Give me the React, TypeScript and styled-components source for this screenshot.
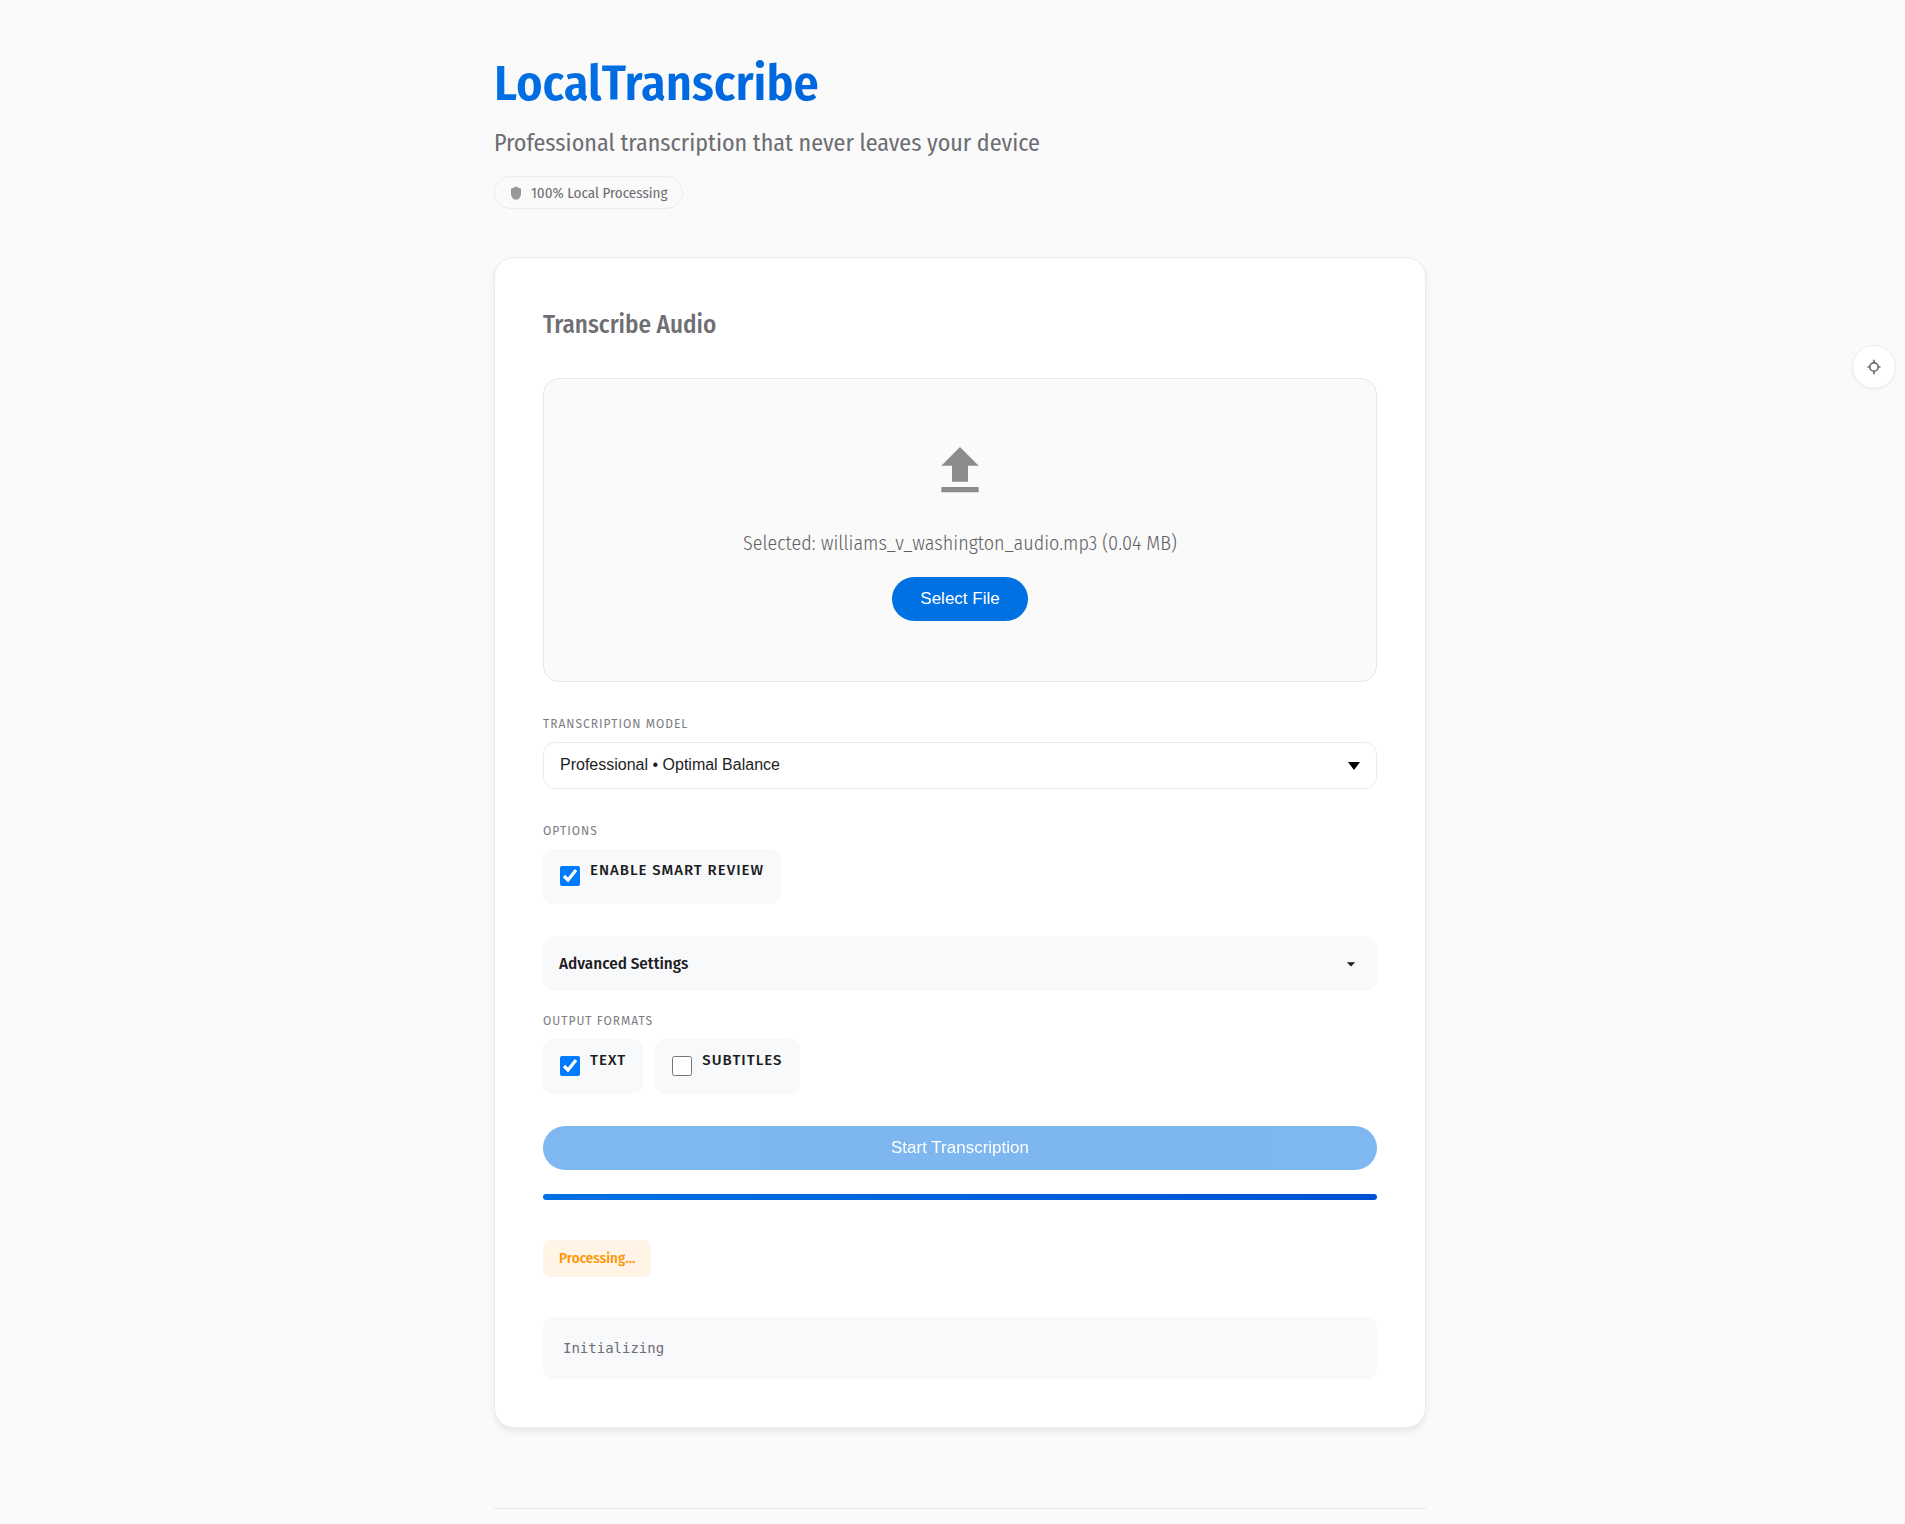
import React, { useState } from 'react';
import styled, { createGlobalStyle } from 'styled-components';

const GlobalStyle = createGlobalStyle`
  *, *::before, *::after { box-sizing: border-box; }
  body {
    margin: 0;
    background: #fafafa;
    color: #1d1d1f;
    font-family: 'Fira Sans Condensed', 'Open Sans', sans-serif;
    font-size: 17px;
    line-height: 24px;
    -webkit-font-smoothing: antialiased;
  }
`;

const Page = styled.div`
  padding: 48px 16px 0 31px;
`;

const Container = styled.div`
  max-width: 932px;
  margin: 0 auto;
`;

const Header = styled.header`
  margin-bottom: 48px;
`;

const Title = styled.h1`
  margin: 0 0 8px;
  font-size: 50px;
  font-weight: 600;
  line-height: 70px;
  background: linear-gradient(135deg, #0071e3, #0051d5);
  background-clip: text;
  -webkit-background-clip: text;
  color: transparent;
`;

const Subtitle = styled.p`
  margin: 0 0 16px;
  font-size: 24px;
  line-height: 34px;
  color: #6e6e73;
`;

const Badge = styled.div`
  display: inline-flex;
  align-items: center;
  gap: 8px;
  height: 33px;
  padding: 0 14px;
  border: 1px solid #ebebeb;
  border-radius: 17px;
  font-size: 15px;
  color: #6e6e73;
  vertical-align: top;
`;

const Card = styled.main`
  padding: 48px;
  background: #ffffff;
  border: 1px solid #ebebeb;
  border-radius: 20px;
  box-shadow: 0 4px 6px rgba(0, 0, 0, 0.07);
`;

const CardTitle = styled.h2`
  margin: 0 0 34px;
  font-size: 25px;
  font-weight: 500;
  line-height: 38px;
  color: #6e6e73;
`;

const DropZone = styled.section`
  display: flex;
  flex-direction: column;
  align-items: center;
  padding: 60px 24px;
  margin-bottom: 32px;
  background: #fafafa;
  border: 1px solid #e8e8e8;
  border-radius: 16px;
`;

const FileName = styled.p`
  margin: 24px 0 18px;
  font-size: 20px;
  font-weight: 300;
  line-height: 32px;
  color: #5f5f64;
`;

const Button = styled.button<{ $wide?: boolean }>`
  display: block;
  width: ${p => (p.$wide ? '100%' : 'auto')};
  height: 44px;
  padding: 0 28px;
  border: 0;
  border-radius: 22px;
  background: #0071e3;
  color: #ffffff;
  font-family: 'Liberation Sans', Arial, sans-serif;
  font-size: 17px;
  cursor: pointer;
  &:disabled { opacity: 0.5; cursor: default; }
`;

const Field = styled.div`
  margin-bottom: 32px;
`;

const FieldSet = styled.fieldset`
  min-width: 0;
  margin: 0 0 32px;
  padding: 0;
  border: 0;
`;

const caption = `
  display: block;
  margin: 0 0 8px;
  padding: 0;
  font-family: 'Fira Sans', 'Open Sans', sans-serif;
  font-size: 12px;
  font-weight: 400;
  line-height: 20px;
  letter-spacing: 1px;
  text-transform: uppercase;
  color: #7c7c81;
`;
const Label = styled.label`${caption}`;
const Legend = styled.legend`${caption}`;

const SelectWrap = styled.div`
  position: relative;
`;

const Select = styled.select`
  display: block;
  width: 100%;
  height: 47px;
  padding: 0 48px 2px 16px;
  appearance: none;
  background: #ffffff;
  border: 1px solid #ebebeb;
  border-radius: 12px;
  color: #1d1d1f;
  font-family: 'Liberation Sans', Arial, sans-serif;
  font-size: 16px;
`;

const SelectArrow = styled.svg`
  position: absolute;
  top: 20px;
  right: 17px;
  pointer-events: none;
`;

const Chips = styled.div`
  display: flex;
  flex-wrap: wrap;
  gap: 12px;
`;

const Chip = styled.label`
  display: flex;
  align-items: center;
  gap: 10px;
  padding: 13px 17px 14px;
  background: #f8f9fb;
  border-radius: 10px;
  cursor: pointer;
`;

const Check = styled.input`
  width: 20px;
  height: 20px;
  margin: 0;
  accent-color: #007aff;
`;

const ChipText = styled.span`
  margin-bottom: 12px;
  font-family: 'Fira Sans', 'Open Sans', sans-serif;
  font-size: 15px;
  font-weight: 500;
  line-height: 16px;
  letter-spacing: 1px;
  text-transform: uppercase;
`;

const Disclosure = styled.button`
  display: flex;
  align-items: center;
  justify-content: space-between;
  width: 100%;
  height: 55px;
  margin-bottom: 20px;
  padding: 0 16px;
  background: #f8f9fb;
  border: 0;
  border-radius: 12px;
  color: #1d1d1f;
  font: inherit;
  font-weight: 500;
  cursor: pointer;
`;

const Track = styled.div`
  height: 6px;
  margin: 24px 0 40px;
  overflow: hidden;
  background: #ebebeb;
  border-radius: 3px;
`;

const Bar = styled.div`
  height: 100%;
  background: linear-gradient(90deg, #0071e3, #0051d5);
`;

const Status = styled.div`
  display: table;
  margin-bottom: 40px;
  padding: 8px 16px;
  background: #fff4e6;
  border-radius: 8px;
  color: #ff9500;
  font-size: 15px;
  font-weight: 500;
  line-height: 21px;
`;

const Log = styled.div`
  padding: 20px;
  background: #f8f9fb;
  border-radius: 12px;
  color: #6e6e73;
  font-family: 'DejaVu Sans Mono', monospace;
  font-size: 14px;
  line-height: 22px;
`;

const Footer = styled.footer`
  height: 16px;
  margin-top: 80px;
  border-top: 1px solid #e8e8e8;
`;

const ThemeButton = styled.button`
  position: fixed;
  top: 345px;
  right: 9px;
  display: grid;
  place-items: center;
  width: 44px;
  height: 44px;
  padding: 0;
  background: #ffffff;
  border: 1px solid #ebebeb;
  border-radius: 50%;
  color: #6e6e73;
  box-shadow: 0 1px 3px rgba(0, 0, 0, 0.05);
  cursor: pointer;
`;

interface ChoiceProps {
  text: string;
  initial?: boolean;
}

function Choice({ text, initial = false }: ChoiceProps) {
  const [on, setOn] = useState(initial);
  return (
    <Chip>
      <Check type="checkbox" checked={on} onChange={e => setOn(e.target.checked)} />
      <ChipText>{text}</ChipText>
    </Chip>
  );
}

export default function App() {
  const progress = 100;
  return (
    <>
      <GlobalStyle />
      <Page>
        <Container>
          <Header>
            <Title>LocalTranscribe</Title>
            <Subtitle>Professional transcription that never leaves your device</Subtitle>
            <Badge>
              <svg width="14" height="14" viewBox="0 0 14 14" fill="#98989d" aria-hidden="true">
                <path d="M7 0.500 12 2.800V7.500c0 2.700-1.200 4.600-3.200 6H5.200C3.200 12.100 2 10.200 2 7.500V2.800z" />
              </svg>
              100% Local Processing
            </Badge>
          </Header>

          <Card>
            <CardTitle>Transcribe Audio</CardTitle>

            <DropZone>
              <svg width="64" height="64" viewBox="0 0 24 24" fill="#8c8c8c" aria-hidden="true">
                <path d="M9 16h6v-6h4l-7-7-7 7h4zm-4 2h14v2H5z" />
              </svg>
              <FileName>Selected: williams_v_washington_audio.mp3 (0.04 MB)</FileName>
              <Button type="button">Select File</Button>
            </DropZone>

            <Field>
              <Label htmlFor="model">Transcription Model</Label>
              <SelectWrap>
                <Select id="model">
                  <option>Professional • Optimal Balance</option>
                </Select>
                <SelectArrow width="12" height="8" viewBox="0 0 12 8" aria-hidden="true">
                  <path d="M0 0h12L6 8z" />
                </SelectArrow>
              </SelectWrap>
            </Field>

            <FieldSet>
              <Legend>Options</Legend>
              <Chips>
                <Choice text="Enable Smart Review" initial />
              </Chips>
            </FieldSet>

            <Disclosure type="button" aria-expanded="false">
              Advanced Settings
              <svg width="20" height="20" viewBox="0 0 24 24" fill="#1d1d1f" aria-hidden="true">
                <path d="M7 10l5 5 5-5z" />
              </svg>
            </Disclosure>

            <FieldSet>
              <Legend>Output Formats</Legend>
              <Chips>
                <Choice text="Text" initial />
                <Choice text="Subtitles" />
              </Chips>
            </FieldSet>

            <Button type="button" $wide disabled>Start Transcription</Button>

            <Track role="progressbar" aria-label="Transcription progress" aria-valuenow={progress}>
              <Bar style={{ width: `${progress}%` }} />
            </Track>

            <Status role="status">Processing...</Status>
            <Log>Initializing</Log>
          </Card>

          <Footer />
        </Container>
      </Page>

      <ThemeButton type="button" aria-label="Toggle theme">
        <svg width="16" height="16" viewBox="0 0 16 16" fill="none" stroke="currentColor" strokeWidth="1.7" aria-hidden="true">
          <circle cx="8" cy="8" r="4.200" />
          <path d="M8 0.800v3M8 12.200v3M1.500 8h2.500M12 8h2.500" />
        </svg>
      </ThemeButton>
    </>
  );
}
